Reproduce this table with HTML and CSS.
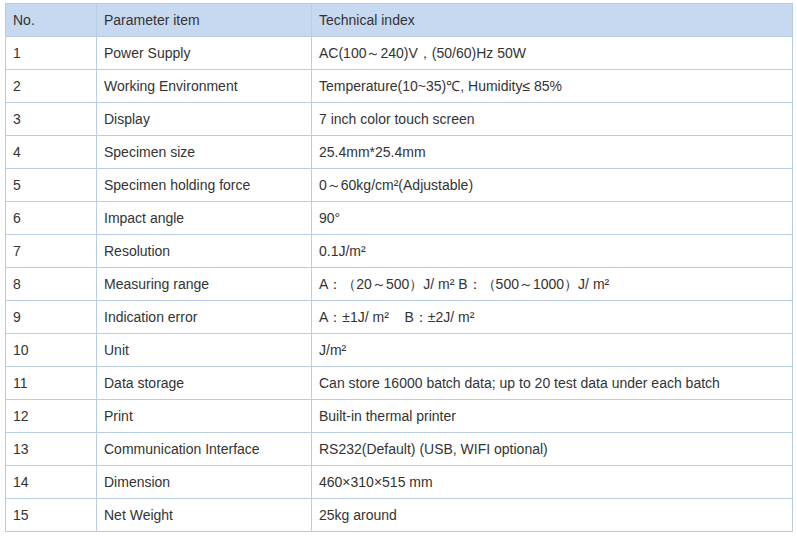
FILE: index.html
```html
<!DOCTYPE html>
<html>
<head>
<meta charset="utf-8">
<link rel="stylesheet" href="styles.css">
</head>
<body>
<table class="spec">
<colgroup><col class="c1"><col class="c2"><col class="c3"></colgroup>
<thead>
<tr><th>No.</th><th>Parameter item</th><th>Technical index</th></tr>
</thead>
<tbody>
<tr><td>1</td><td>Power Supply</td><td>AC(100～240)V，(50/60)Hz 50W</td></tr>
<tr><td>2</td><td>Working Environment</td><td>Temperature(10~35)℃, Humidity≤ 85%</td></tr>
<tr><td>3</td><td>Display</td><td>7 inch color touch screen</td></tr>
<tr><td>4</td><td>Specimen size</td><td>25.4mm*25.4mm</td></tr>
<tr><td>5</td><td>Specimen holding force</td><td>0～60kg/cm²(Adjustable)</td></tr>
<tr><td>6</td><td>Impact angle</td><td>90°</td></tr>
<tr><td>7</td><td>Resolution</td><td>0.1J/m²</td></tr>
<tr><td>8</td><td>Measuring range</td><td>A：（20～500）J/ m² B：（500～1000）J/ m²</td></tr>
<tr><td>9</td><td>Indication error</td><td>A：±1J/ m²&nbsp;&nbsp;&nbsp; B：±2J/ m²</td></tr>
<tr><td>10</td><td>Unit</td><td>J/m²</td></tr>
<tr><td>11</td><td>Data storage</td><td>Can store 16000 batch data; up to 20 test data under each batch</td></tr>
<tr><td>12</td><td>Print</td><td>Built-in thermal printer</td></tr>
<tr><td>13</td><td>Communication Interface</td><td>RS232(Default) (USB, WIFI optional)</td></tr>
<tr><td>14</td><td>Dimension</td><td>460×310×515 mm</td></tr>
<tr><td>15</td><td>Net Weight</td><td>25kg around</td></tr>
</tbody>
</table>
</body>
</html>
```
FILE: styles.css
```css
html, body {
  margin: 0;
  padding: 0;
  background: #ffffff;
}
body {
  padding: 3px 0 0 5px;
  font-family: "Liberation Sans", Arial, sans-serif;
  font-size: 14px;
  color: #333333;
}
.spec {
  border-collapse: collapse;
  table-layout: fixed;
  width: 787px;
}
.c1 { width: 91px; }
.c2 { width: 215px; }
.c3 { width: 481px; }
.spec th,
.spec td {
  border: 1px solid #b9cde5;
  height: 33px;
  padding: 0 7px;
  text-align: left;
  font-weight: normal;
  vertical-align: middle;
  white-space: nowrap;
  box-sizing: border-box;
  line-height: 16px;
}
.spec thead th {
  background: #c6d9f1;
}
```
